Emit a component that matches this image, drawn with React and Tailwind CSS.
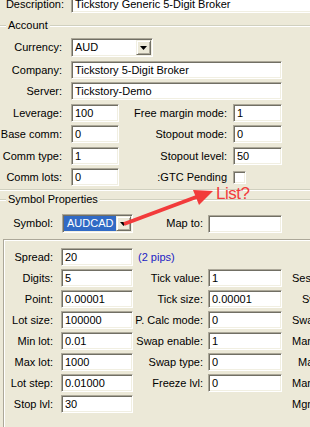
import React from 'react';

// sunken XP-classic edit border
const SUNKEN = 'bg-white border border-t-[#aca899] border-l-[#aca899] border-b-white border-r-white shadow-[inset_1px_1px_0_#716f64,inset_-1px_-1px_0_#f1efe2]';
const ETCHED = 'h-[2px] border-t border-b border-t-[#d0d0bf] border-b-white';

function Edit({ value, className = '' }) {
  return (
    <div className={`h-[18px] shrink-0 flex items-center pl-[3px] whitespace-nowrap overflow-hidden ${SUNKEN} ${className}`}>
      {value}
    </div>
  );
}

function Combo({ value, selected, className = '' }) {
  return (
    <div className={`h-[19px] shrink-0 flex ${SUNKEN} ${className}`}>
      <div className="flex-1 flex items-center pl-[1px]">
        {selected ? (
          <span className="h-[15px] flex items-center px-[3px] bg-[#316ac5] text-white">{value}</span>
        ) : (
          <span className="pl-[2px]">{value}</span>
        )}
      </div>
      <div className="w-[15px] my-[1px] mr-[1px] flex items-center justify-center bg-[#ece9d8] border border-t-[#f1efe2] border-l-[#f1efe2] border-b-[#716f64] border-r-[#716f64] shadow-[inset_1px_1px_0_#fff,inset_-1px_-1px_0_#aca899]">
        <svg width="7" height="4" viewBox="0 0 7 4"><path d="M0 0h7L3.5 4z" fill="#000" /></svg>
      </div>
    </div>
  );
}

function GroupHeader({ title, className = '' }) {
  return (
    <div className={`flex items-center h-[13px] ${className}`}>
      <div className={`w-[6px] shrink-0 ${ETCHED}`} />
      <span className="px-[2px] whitespace-nowrap shrink-0">{title}</span>
      <div className={`flex-1 ${ETCHED}`} />
    </div>
  );
}

function AccRow({ l1, v1, l2, v2, check, mt }) {
  return (
    <div className={`flex items-center h-[18px] ${mt}`}>
      <span className="w-[62px] shrink-0 text-right whitespace-nowrap">{l1}</span>
      <Edit className="ml-[9px] w-[48px]" value={v1} />
      <span className="w-[114px] shrink-0 text-right pr-[6px] whitespace-nowrap">{l2}</span>
      {check ? (
        <div className={`w-[13px] h-[13px] shrink-0 ${SUNKEN}`} />
      ) : (
        <Edit className="w-[49px]" value={v2} />
      )}
    </div>
  );
}

const symbolRows = [
  { l: 'Spread:', v: '20', pips: '(2 pips)' },
  { l: 'Digits:', v: '5', ml: 'Tick value:', mv: '1', r: 'Sessions:', rm: 'ml-[10px]' },
  { l: 'Point:', v: '0.00001', ml: 'Tick size:', mv: '0.00001', r: 'Swap long:', rm: 'ml-[20px]' },
  { l: 'Lot size:', v: '100000', ml: 'P. Calc mode:', mv: '0', r: 'Swap short:', rm: 'ml-[10px]' },
  { l: 'Min lot:', v: '0.01', ml: 'Swap enable:', mv: '1', r: 'Margin init:', rm: 'ml-[10px]' },
  { l: 'Max lot:', v: '1000', ml: 'Swap type:', mv: '0', r: 'Margin:', rm: 'ml-[16px]' },
  { l: 'Lot step:', v: '0.01000', ml: 'Freeze lvl:', mv: '0', r: 'Margin hedged:', rm: 'ml-[10px]' },
  { l: 'Stop lvl:', v: '30', r: 'Mgn currency:', rm: 'ml-[10px]' },
];

export default function App() {
  return (
    <div className="relative w-[310px] h-[427px] overflow-hidden bg-[#ece9d8] text-black text-[11px] leading-[13px] [font-family:'Liberation_Sans',Arial,sans-serif]">
      <div className="flex flex-col -mt-[5px]">
        {/* Description */}
        <div className="flex items-center h-[18px]">
          <span className="w-[64px] shrink-0 text-right whitespace-nowrap">Description:</span>
          <Edit className="ml-[7px] w-[260px]" value="Tickstory Generic 5-Digit Broker" />
        </div>

        {/* Account */}
        <GroupHeader title="Account" className="mt-[6px]" />
        <div className="flex items-center h-[19px] mt-[6px]">
          <span className="w-[62px] shrink-0 text-right">Currency:</span>
          <Combo className="ml-[9px] w-[82px]" value="AUD" />
        </div>
        <div className="flex items-center h-[18px] mt-[4px]">
          <span className="w-[62px] shrink-0 text-right">Company:</span>
          <Edit className="ml-[9px] w-[211px]" value="Tickstory 5-Digit Broker" />
        </div>
        <div className="flex items-center h-[18px] mt-[3px]">
          <span className="w-[62px] shrink-0 text-right">Server:</span>
          <Edit className="ml-[9px] w-[211px]" value="Tickstory-Demo" />
        </div>
        <AccRow mt="mt-[4px]" l1="Leverage:" v1="100" l2="Free margin mode:" v2="1" />
        <AccRow mt="mt-[3px]" l1="Base comm:" v1="0" l2="Stopout mode:" v2="0" />
        <AccRow mt="mt-[4px]" l1="Comm type:" v1="1" l2="Stopout level:" v2="50" />
        <AccRow mt="mt-[3px]" l1="Comm lots:" v1="0" l2=":GTC Pending" check />
        <div className={`mt-[3px] ${ETCHED}`} />

        {/* Symbol Properties */}
        <GroupHeader title="Symbol Properties" className="mt-[2px]" />
        <div className="flex items-center h-[19px] mt-[8px]">
          <span className="w-[53px] shrink-0 text-right">Symbol:</span>
          <Combo className="ml-[9px] w-[71px]" value="AUDCAD" selected />
          <span className="w-[75px] shrink-0 text-right pr-[5px]">Map to:</span>
          <Edit className="w-[74px]" value="" />
        </div>

        <div className="mt-[6px] ml-[3px] h-[200px] pt-[8px] border-t border-l border-t-[#aca899] border-l-[#aca899] shadow-[inset_1px_1px_0_#fff] flex flex-col gap-[3px]">
          {symbolRows.map((r) => (
            <div key={r.l} className="flex items-center h-[18px]">
              <span className="w-[51px] shrink-0 text-right pr-[2px] whitespace-nowrap">{r.l}</span>
              <Edit className="ml-[6px] w-[72px]" value={r.v} />
              {r.pips && <span className="ml-[5px] shrink-0 whitespace-nowrap text-[#1c1cc4]">{r.pips}</span>}
              {r.ml && (
                <>
                  <span className="w-[75px] shrink-0 text-right pr-[5px] whitespace-nowrap">{r.ml}</span>
                  <Edit className="w-[74px]" value={r.mv} />
                </>
              )}
              {!r.ml && !r.pips && <div className="w-[149px] shrink-0" />}
              {r.r && <span className={`shrink-0 whitespace-nowrap ${r.rm}`}>{r.r}</span>}
            </div>
          ))}
        </div>
      </div>

      {/* annotation */}
      <svg className="absolute left-0 top-0 pointer-events-none" width="310" height="427">
        <line x1="124" y1="224" x2="199" y2="196" stroke="#f23b3b" strokeWidth="4" />
        <polygon points="213,191 199,205 193,190" fill="#f23b3b" />
      </svg>
      <span className="absolute left-[216px] top-[185px] text-[17px] leading-[17px] tracking-[-0.5px] text-[#f23b3b] whitespace-nowrap">List?</span>
    </div>
  );
}
